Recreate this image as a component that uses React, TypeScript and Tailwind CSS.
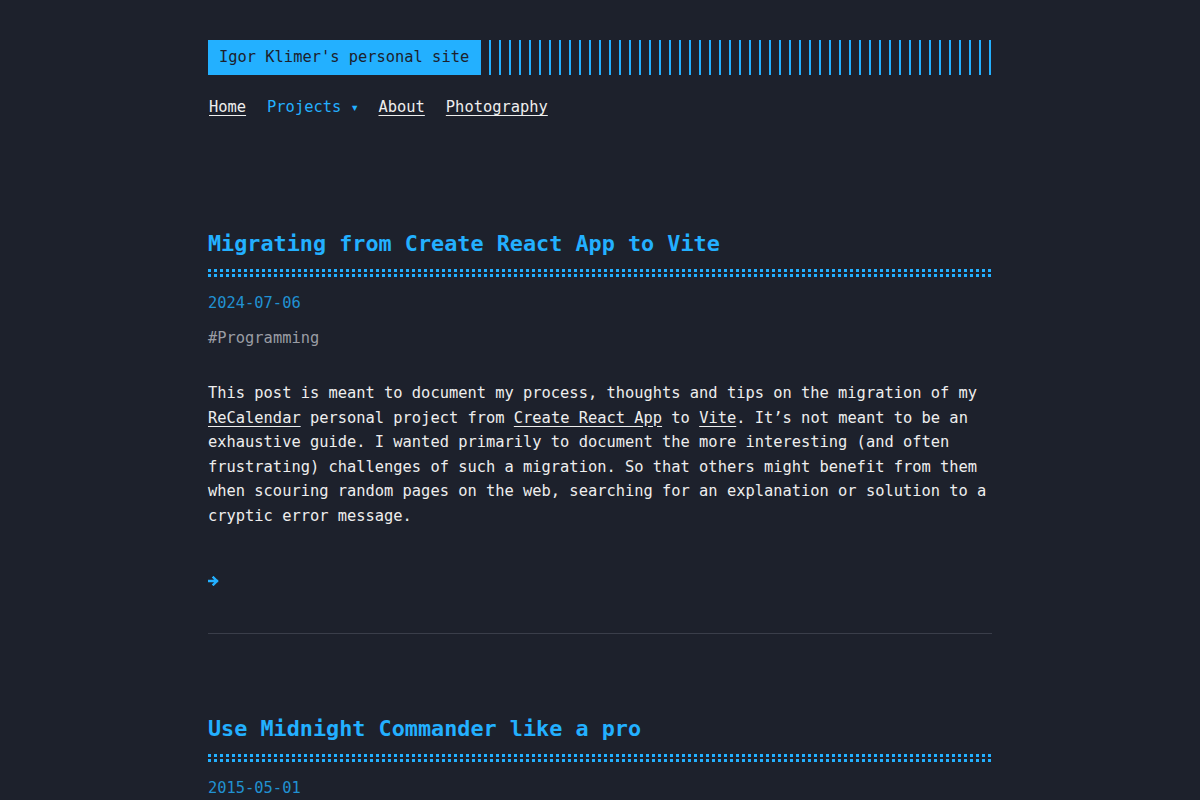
import type { ReactNode } from 'react';

type Post = {
    title: string;
    date: string;
    tags: string[];
    body: ReactNode;
};

const posts: Post[] = [
    {
        title: 'Migrating from Create React App to Vite',
        date: '2024-07-06',
        tags: ['Programming'],
        body: (
            <>
                This post is meant to document my process, thoughts and tips on the migration of my{' '}
                <a href="#" className="underline underline-offset-[3px]">ReCalendar</a> personal project from{' '}
                <a href="#" className="underline underline-offset-[3px]">Create React App</a> to{' '}
                <a href="#" className="underline underline-offset-[3px]">Vite</a>. It’s not meant to be an
                exhaustive guide. I wanted primarily to document the more interesting (and often
                frustrating) challenges of such a migration. So that others might benefit from them
                when scouring random pages on the web, searching for an explanation or solution to a
                cryptic error message.
            </>
        ),
    },
    {
        title: 'Use Midnight Commander like a pro',
        date: '2015-05-01',
        tags: ['Linux'],
        body: (
            <>
                Midnight Commander is a visual file manager for the console. A few tips and
                keyboard shortcuts that make working with it much faster.
            </>
        ),
    },
];

const navLinks = ['Home', 'Projects', 'About', 'Photography'];

function ReadMoreArrow() {
    return (
        <svg width="11" height="10" viewBox="0 0 11 10" fill="none">
            <path
                d="M1 5h8M5.5 1.5L9 5l-3.5 3.5"
                stroke="#23b0ff"
                strokeWidth="2.4"
                strokeLinecap="square"
            />
        </svg>
    );
}

function DottedRule() {
    // two rows of square dots under each post title
    return (
        <div className="mt-[11px] flex flex-col gap-[2px]">
            <div className="h-[3px] w-full bg-[repeating-linear-gradient(90deg,#23b0ff_0_3px,transparent_3px_6px)]" />
            <div className="h-[3px] w-full bg-[repeating-linear-gradient(90deg,#23b0ff_0_3px,transparent_3px_6px)]" />
        </div>
    );
}

function PostPreview({ post, last }: { post: Post; last: boolean }) {
    return (
        <article>
            <h2 className="text-[21.8px] font-bold leading-[28px] text-[#23b0ff]">
                <a href="#">{post.title}</a>
            </h2>
            <DottedRule />
            <div className="mt-[14px] text-[#2191d2]">{post.date}</div>
            <div className="mt-[11px] text-[#9a9da4]">
                {post.tags.map((tag) => (
                    <a key={tag} href="#">#{tag}</a>
                ))}
            </div>
            <p className="mt-[30px]">{post.body}</p>
            <div className="mt-[40px] flex h-[24.6px] items-center">
                <a href="#" aria-label="Read more">
                    <ReadMoreArrow />
                </a>
            </div>
            {!last && <hr className="mt-[40px] mb-[81px] border-0 border-t border-[#3a3e4a]" />}
        </article>
    );
}

export default function App() {
    return (
        <div className="min-h-screen bg-[#1d212c] font-['DejaVu_Sans_Mono',monospace] text-[15.4px] leading-[1.6] text-[#eeeeee]">
            <div className="mx-auto max-w-[784px] pt-[40px]">
                <header>
                    <div className="flex h-[35px] items-stretch">
                        <a
                            href="#"
                            className="flex items-center bg-[#23b0ff] pl-[11px] pr-[12px] text-[#1d212c]"
                        >
                            Igor Klimer's personal site
                        </a>
                        <div className="ml-[8px] flex-1 bg-[repeating-linear-gradient(90deg,#23b0ff_0_2px,transparent_2px_10px)]" />
                    </div>
                    <nav className="mt-[20px] flex gap-[21px] pl-[1px]">
                        {navLinks.map((link) =>
                            link === 'Projects' ? (
                                <span key={link} className="text-[#23b0ff]">
                                    Projects{' '}
                                    <span className="inline-block w-[7px] text-[14px]">▾</span>
                                </span>
                            ) : (
                                <a key={link} href="#" className="underline underline-offset-[3px]">
                                    {link}
                                </a>
                            )
                        )}
                    </nav>
                </header>

                <main className="mt-[110px]">
                    {posts.map((post, i) => (
                        <PostPreview key={post.title} post={post} last={i === posts.length - 1} />
                    ))}
                </main>
            </div>
        </div>
    );
}
